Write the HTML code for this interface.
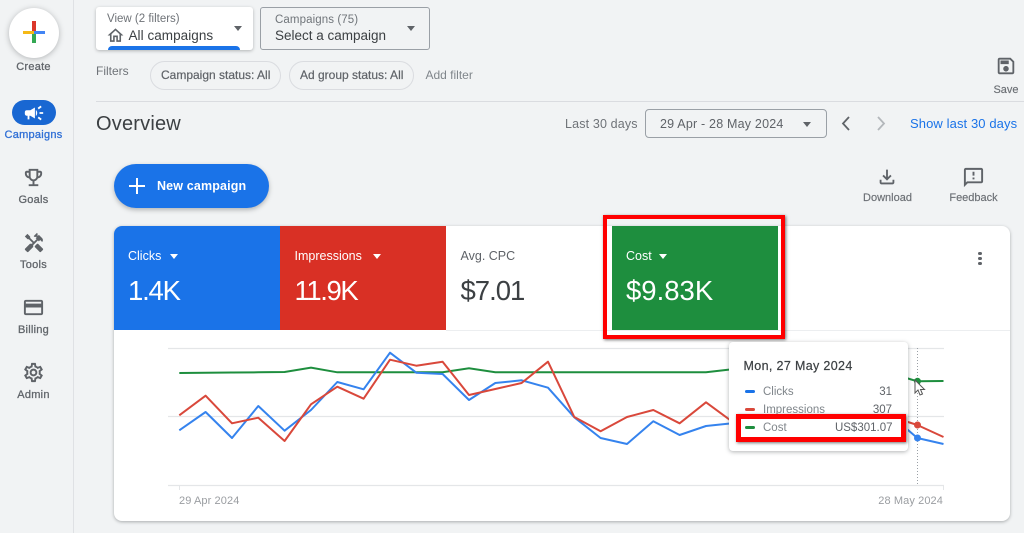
<!DOCTYPE html>
<html><head><meta charset="utf-8"><style>
html,body{margin:0;padding:0}
body{width:1024px;height:533px;overflow:hidden;background:#f1f3f4;position:relative;font-family:"Liberation Sans",Arial,sans-serif;color:#5f6368}
.a{position:absolute}
.t{position:absolute;white-space:nowrap;line-height:16px;height:16px}
.c{transform:translateX(-50%)}
.r{transform:translateX(-100%)}
svg.i{position:absolute;fill:#5f6368}
.nav{font-size:11px;color:#62666b;letter-spacing:.25px;-webkit-text-stroke:.3px currentColor}
.tri{position:absolute;width:0;height:0;border-left:4.5px solid transparent;border-right:4.5px solid transparent;border-top:5px solid #5f6368}
.trw{border-top-color:#fff}
.chip{position:absolute;height:27px;top:61px;border:1px solid #dadce0;border-radius:15px}
.lg{position:absolute;width:10px;height:3px;border-radius:2px;left:745px}
</style></head><body>

<div class="a" style="left:73px;top:0;width:1px;height:533px;background:#dfe1e4"></div>

<!-- Create -->
<div class="a" style="left:9px;top:8px;width:50px;height:50px;border-radius:50%;background:#fff;box-shadow:0 1px 6px rgba(60,64,67,.35)"></div>
<div class="a" style="left:32px;top:21px;width:3.5px;height:12px;background:#db372a"></div>
<div class="a" style="left:23px;top:30.5px;width:11px;height:3.5px;background:#f5b916"></div>
<div class="a" style="left:34px;top:30.5px;width:11px;height:3.5px;background:#4285f4"></div>
<div class="a" style="left:32px;top:34px;width:3.5px;height:9px;background:#34a853"></div>
<div class="t nav c" style="left:33.5px;top:59px">Create</div>

<!-- Campaigns -->
<div class="a" style="left:12px;top:100px;width:44px;height:25px;border-radius:13px;background:#1967d2"></div>
<svg class="i" style="left:23px;top:102px;width:22px;height:22px;fill:#fff" viewBox="0 0 24 24"><path d="M18 11v2h4v-2h-4zm-2 6.61c.96.71 2.21 1.65 3.2 2.39.4-.53.8-1.07 1.2-1.6-.99-.74-2.24-1.68-3.2-2.4-.4.54-.8 1.08-1.2 1.61zM20.4 5.6c-.4-.53-.8-1.07-1.2-1.6-.99.74-2.24 1.68-3.2 2.4.4.53.8 1.07 1.2 1.6.96-.72 2.21-1.65 3.2-2.4zM4 9c-1.1 0-2 .9-2 2v2c0 1.1.9 2 2 2h1v4h2v-4h1l5 3V6L8 9H4zm11.5 3c0-1.33-.58-2.53-1.5-3.35v6.69c.92-.81 1.5-2.01 1.5-3.34z"/></svg>
<div class="t nav c" style="left:33.5px;top:127px;color:#2f6fd6">Campaigns</div>

<!-- Goals -->
<svg class="i" style="left:22px;top:166px;width:23px;height:23px" viewBox="0 0 24 24"><path d="M19 5h-2V3H7v2H5c-1.1 0-2 .9-2 2v1c0 2.55 1.92 4.63 4.39 4.94.63 1.5 1.98 2.63 3.61 2.96V19H7v2h10v-2h-4v-3.1c1.63-.33 2.98-1.46 3.61-2.96C19.08 12.63 21 10.55 21 8V7c0-1.1-.9-2-2-2zM5 8V7h2v3.82C5.84 10.4 5 9.3 5 8zm7 6c-1.65 0-3-1.35-3-3V5h6v6c0 1.65-1.35 3-3 3zm7-6c0 1.3-.84 2.4-2 2.82V7h2v1z"/></svg>
<div class="t nav c" style="left:33.5px;top:192px">Goals</div>

<!-- Tools -->
<svg class="i" style="left:23px;top:232px;width:22px;height:22px" viewBox="0 0 24 24"><path d="M21.67 18.17l-5.3-5.3h-.99l-2.54 2.54v.99l5.3 5.3c.39.39 1.02.39 1.41 0l2.12-2.12c.39-.38.39-1.02 0-1.41z"/><path d="M17.34 10.19l1.41-1.41 2.12 2.12c1.17-1.17 1.17-3.07 0-4.24l-3.54-3.54-1.41 1.41V1.71l-.7-.71-3.54 3.54.71.71h2.83l-1.41 1.41 1.06 1.06-2.89 2.89-4.13-4.13V5.06L4.83 2.04 2 4.87 5.03 7.9h1.41l4.13 4.13-.85.85H7.6l-5.3 5.3c-.39.39-.39 1.02 0 1.41l2.12 2.12c.39.39 1.02.39 1.41 0l5.3-5.3v-2.12l5.15-5.15 1.06 1.05z"/></svg>
<div class="t nav c" style="left:33.5px;top:257px">Tools</div>

<!-- Billing -->
<svg class="i" style="left:22px;top:296px;width:23px;height:23px" viewBox="0 0 24 24"><path d="M20 4H4c-1.11 0-1.99.89-1.99 2L2 18c0 1.11.89 2 2 2h16c1.11 0 2-.89 2-2V6c0-1.11-.89-2-2-2zm0 14H4v-6h16v6zm0-10H4V6h16v2z"/></svg>
<div class="t nav c" style="left:33.5px;top:322px">Billing</div>

<!-- Admin -->
<svg class="i" style="left:22px;top:361px;width:23px;height:23px" viewBox="0 0 24 24"><path d="M19.43 12.98c.04-.32.07-.64.07-.98 0-.34-.03-.66-.07-.98l2.11-1.65c.19-.15.24-.42.12-.64l-2-3.46c-.09-.16-.26-.25-.44-.25-.06 0-.12.01-.17.03l-2.49 1c-.52-.4-1.08-.73-1.69-.98l-.38-2.65C14.46 2.18 14.25 2 14 2h-4c-.25 0-.46.18-.49.42l-.38 2.65c-.61.25-1.17.59-1.69.98l-2.49-1c-.06-.02-.12-.03-.18-.03-.17 0-.34.09-.43.25l-2 3.46c-.13.22-.07.49.12.64l2.11 1.65c-.04.32-.07.65-.07.98 0 .33.03.66.07.98l-2.11 1.65c-.19.15-.24.42-.12.64l2 3.46c.09.16.26.25.44.25.06 0 .12-.01.17-.03l2.49-1c.52.4 1.08.73 1.69.98l.38 2.65c.03.24.24.42.49.42h4c.25 0 .46-.18.49-.42l.38-2.65c.61-.25 1.17-.59 1.69-.98l2.49 1c.06.02.12.03.18.03.17 0 .34-.09.43-.25l2-3.46c.12-.22.07-.49-.12-.64l-2.11-1.65zm-1.98-1.71c.04.31.05.52.05.73 0 .21-.02.43-.05.73l-.14 1.13.89.7 1.08.84-.7 1.21-1.27-.51-1.04-.42-.9.68c-.43.32-.84.56-1.25.73l-1.06.43-.16 1.13-.2 1.35h-1.4l-.19-1.35-.16-1.13-1.06-.43c-.43-.18-.83-.41-1.23-.71l-.91-.7-1.06.43-1.27.51-.7-1.21 1.08-.84.89-.7-.14-1.13c-.03-.31-.05-.54-.05-.74s.02-.43.05-.73l.14-1.13-.89-.7-1.08-.84.7-1.21 1.27.51 1.04.42.9-.68c.43-.32.84-.56 1.25-.73l1.06-.43.16-1.13.2-1.35h1.39l.19 1.35.16 1.13 1.06.43c.43.18.83.41 1.23.71l.91.7 1.06-.43 1.27-.51.7 1.21-1.07.85-.89.7.14 1.13zM12 8c-2.21 0-4 1.79-4 4s1.79 4 4 4 4-1.79 4-4-1.79-4-4-4zm0 6c-1.1 0-2-.9-2-2s.9-2 2-2 2 .9 2 2-.9 2-2 2z"/></svg>
<div class="t nav c" style="left:33.5px;top:387px">Admin</div>

<!-- View box -->
<div class="a" style="left:96px;top:7px;width:157px;height:43px;background:#fff;border-radius:3px;box-shadow:0 1px 3px rgba(60,64,67,.35);overflow:hidden">
  <div class="a" style="left:12px;top:39px;width:132px;height:6px;background:#1a73e8;border-radius:4px 4px 0 0"></div>
</div>
<div class="t" style="left:107px;top:11px;font-size:11.5px;color:#6f7378">View (2 filters)</div>
<svg class="i" style="left:106px;top:26px;width:19px;height:19px" viewBox="0 0 24 24"><path d="M12 5.69l5 4.5V18h-2v-6H9v6H7v-7.81l5-4.5M12 3L2 12h3v8h6v-6h2v6h6v-8h3L12 3z"/></svg>
<div class="t" style="left:128.5px;top:28px;font-size:13.5px;color:#3c4043;letter-spacing:.05px">All campaigns</div>
<div class="tri" style="left:234px;top:26px"></div>

<!-- Campaign box -->
<div class="a" style="left:260px;top:7px;width:168px;height:41px;border:1px solid #9aa0a6;border-radius:3px"></div>
<div class="t" style="left:275px;top:12px;font-size:11.5px;color:#70757a;letter-spacing:.1px">Campaigns (75)</div>
<div class="t" style="left:275px;top:28px;font-size:13.5px;color:#3c4043">Select a campaign</div>
<div class="tri" style="left:407px;top:26px"></div>

<!-- Filters -->
<div class="t" style="left:96px;top:63px;font-size:12px;color:#6f7378">Filters</div>
<div class="chip" style="left:150px;width:129px"></div>
<div class="t" style="left:161px;top:67px;font-size:12px;color:#5f6368;-webkit-text-stroke:.2px #5f6368">Campaign status: All</div>
<div class="chip" style="left:289px;width:123px"></div>
<div class="t" style="left:300px;top:67px;font-size:12px;color:#5f6368;-webkit-text-stroke:.2px #5f6368">Ad group status: All</div>
<div class="t" style="left:425.5px;top:67px;font-size:12px;color:#80868b">Add filter</div>

<!-- Save -->
<svg class="i" style="left:995px;top:55px;width:22px;height:22px" viewBox="0 0 24 24"><path d="M17 3H5c-1.11 0-2 .9-2 2v14c0 1.1.89 2 2 2h14c1.1 0 2-.9 2-2V7l-4-4zm2 16H5V5h11.17L19 7.83V19zm-7-7c-1.66 0-3 1.34-3 3s1.34 3 3 3 3-1.34 3-3-1.34-3-3-3zM6 6h9v4H6z"/></svg>
<div class="t c" style="left:1006px;top:82px;font-size:11px;color:#6b6f74;-webkit-text-stroke:.15px #6b6f74">Save</div>

<div class="a" style="left:96px;top:101px;width:928px;height:1px;background:#dadce0"></div>

<!-- Overview row -->
<div class="t" style="left:96px;top:112px;font-size:20px;line-height:24px;height:24px;color:#3c4043;letter-spacing:.2px">Overview</div>
<div class="t" style="left:565px;top:116px;font-size:12.5px;color:#6f7378;letter-spacing:.15px">Last 30 days</div>
<div class="a" style="left:645px;top:109px;width:180px;height:27px;border:1px solid #9aa0a6;border-radius:4px"></div>
<div class="t" style="left:660px;top:116px;font-size:12.5px;color:#5f6368;letter-spacing:.2px">29 Apr - 28 May 2024</div>
<div class="tri" style="left:803px;top:122px"></div>
<svg class="a" style="left:838px;top:114px" width="50" height="20" fill="none"><path d="M11 3L5 9.5 11 16" stroke="#5f6368" stroke-width="1.8"/><path d="M40 3l6 6.5-6 6.5" stroke="#b3b7bb" stroke-width="1.8"/></svg>
<div class="t" style="left:910px;top:116px;font-size:13px;color:#1a73e8;letter-spacing:.1px">Show last 30 days</div>

<!-- New campaign -->
<div class="a" style="left:114px;top:164px;width:155px;height:44px;border-radius:22px;background:#1a73e8;box-shadow:0 2px 5px rgba(60,64,67,.35)"></div>
<div class="a" style="left:129px;top:185px;width:16px;height:2.4px;background:#fff"></div>
<div class="a" style="left:135.8px;top:178px;width:2.4px;height:16px;background:#fff"></div>
<div class="t" style="left:157px;top:178px;font-size:12.5px;font-weight:bold;color:#fff;letter-spacing:.15px">New campaign</div>

<!-- Download & Feedback -->
<svg class="i" style="left:876px;top:166px;width:22px;height:22px" viewBox="0 0 24 24"><path d="M18 15v3H6v-3H4v3c0 1.1.9 2 2 2h12c1.1 0 2-.9 2-2v-3h-2zm-1-4l-1.41-1.41L13 12.17V4h-2v8.17L8.41 9.59 7 11l5 5 5-5z"/></svg>
<div class="t c" style="left:887.5px;top:190px;font-size:11px;color:#6b6f74;-webkit-text-stroke:.15px #6b6f74">Download</div>
<svg class="i" style="left:962px;top:166px;width:23px;height:23px" viewBox="0 0 24 24"><path d="M20 2H4c-1.1 0-1.99.9-1.99 2L2 22l4-4h14c1.1 0 2-.9 2-2V4c0-1.1-.9-2-2-2zm0 14H5.17L4 17.17V4h16v12zM11 12h2v2h-2zm0-6h2v4h-2z"/></svg>
<div class="t c" style="left:973.5px;top:190px;font-size:11px;color:#6b6f74;-webkit-text-stroke:.15px #6b6f74">Feedback</div>

<!-- Card -->
<div class="a" style="left:114px;top:226px;width:896px;height:295px;background:#fff;border-radius:8px;box-shadow:0 1px 3px rgba(60,64,67,.4);overflow:hidden">
  <div class="a" style="left:0;top:0;width:166px;height:104px;background:#1a73e8"></div>
  <div class="a" style="left:166px;top:0;width:166px;height:104px;background:#d93025"></div>
  <div class="a" style="left:332px;top:104px;width:564px;height:1px;background:#eceef0"></div>
</div>

<!-- Metrics -->
<div class="t" style="left:128px;top:248px;font-size:12.5px;color:#fff">Clicks</div>
<div class="tri trw" style="left:170px;top:254px"></div>
<div class="t" style="left:128px;top:274px;font-size:27.5px;line-height:34px;height:34px;color:#fff;letter-spacing:-1.2px">1.4K</div>
<div class="t" style="left:294.5px;top:248px;font-size:12.5px;color:#fff">Impressions</div>
<div class="tri trw" style="left:372.5px;top:254px"></div>
<div class="t" style="left:294.5px;top:274px;font-size:27.5px;line-height:34px;height:34px;color:#fff;letter-spacing:-1.4px">11.9K</div>
<div class="t" style="left:460.5px;top:248px;font-size:12.5px;color:#5f6368">Avg. CPC</div>
<div class="t" style="left:460.5px;top:274px;font-size:27.5px;line-height:34px;height:34px;color:#3c4043;letter-spacing:-1px">$7.01</div>

<!-- Cost -->
<div class="a" style="left:612px;top:226px;width:166px;height:104px;background:#1e8e3e"></div>
<div class="t" style="left:626px;top:248px;font-size:12.5px;color:#fff">Cost</div>
<div class="tri trw" style="left:659px;top:254px"></div>
<div class="t" style="left:626px;top:274px;font-size:27.5px;line-height:34px;height:34px;color:#fff">$9.83K</div>
<div class="a" style="left:603px;top:215px;width:174px;height:116px;border:4.5px solid #f00;box-shadow:1px 1px 3px rgba(0,0,0,.55)"></div>

<!-- More -->
<div class="a" style="left:978.2px;top:251.5px;width:3.6px;height:3.6px;border-radius:50%;background:#5f6368"></div>
<div class="a" style="left:978.2px;top:256.5px;width:3.6px;height:3.6px;border-radius:50%;background:#5f6368"></div>
<div class="a" style="left:978.2px;top:261.5px;width:3.6px;height:3.6px;border-radius:50%;background:#5f6368"></div>

<!-- Chart -->
<svg class="a" style="left:0;top:0" width="1024" height="533" fill="none">
  <path d="M168 348.5H944M168 416.5H944M168 485.5H944" stroke="#e4e6e8" stroke-width="1.2"/>
  <path d="M179.5 485v5M943.5 485v5" stroke="#e4e6e8" stroke-width="1"/>
  <path d="M917.5 348V485" stroke="#9aa0a6" stroke-width="1" stroke-dasharray="1 2"/>
  <polyline stroke="#1e8e3e" stroke-width="2" points="179.3,373 205.6,372.7 232,372.5 258.3,372.3 284.6,372 311,367.7 337.3,372.3 363.6,372.3 390,372.3 416.3,372.3 442.6,372.3 469,368.3 495.3,372.3 521.6,372.3 548,372.3 574.3,372.3 600.6,372.3 627,372.3 653.3,372.3 679.6,372.3 706,372.3 732.3,369.3 758,367 880,372 908,378.5 917.3,381.3 943.5,381"/>
  <polyline stroke="#3583ee" stroke-width="2" stroke-linejoin="round" points="179.3,430.3 205.6,412 232,438 258.3,406 284.6,430.7 311,410 337.3,382 363.6,389.3 390,352.7 416.3,372.7 442.6,374 469,400 495.3,383 521.6,380.3 548,387.7 574.3,417.3 600.6,438 627,444 653.3,421.3 679.6,435 706,426 732.3,423.3 890,425 908,430 917.3,438 943.5,444"/>
  <polyline stroke="#d9483b" stroke-width="2" stroke-linejoin="round" points="179.3,415.3 205.6,395.7 232,423.3 258.3,417.7 284.6,441 311,404.3 337.3,386.7 363.6,398.7 390,359.7 416.3,365.7 442.6,361.7 469,395 495.3,389 521.6,383 548,361.7 574.3,417 600.6,431.3 627,417 653.3,410 679.6,423.3 706,402.3 732.3,421.7 890,415 908,422 917.3,425 943.5,437"/>
  <circle cx="917.5" cy="381.3" r="3.5" fill="#1e8e3e"/>
  <circle cx="917.5" cy="425" r="3.5" fill="#d9483b"/>
  <circle cx="917.5" cy="438" r="3.5" fill="#3583ee"/>
  <path d="M915 380l0 13 3-3 2 5 2.5-1-2-4.5 4 0z" fill="#fff" stroke="#555" stroke-width="1"/>
</svg>
<div class="t" style="left:179px;top:492.5px;font-size:11px;color:#9a9da1;letter-spacing:.1px">29 Apr 2024</div>
<div class="t r" style="left:943px;top:492.5px;font-size:11px;color:#9a9da1;letter-spacing:.1px">28 May 2024</div>

<!-- Tooltip -->
<div class="a" style="left:729px;top:342px;width:179px;height:109px;background:#fff;border-radius:4px;box-shadow:0 1px 4px rgba(60,64,67,.4)"></div>
<div class="t" style="left:743.5px;top:358px;font-size:12.5px;color:#3c4043;letter-spacing:.35px;-webkit-text-stroke:.2px #3c4043">Mon, 27 May 2024</div>
<div class="lg" style="top:389.5px;background:#1a73e8"></div>
<div class="t" style="left:763px;top:383.5px;font-size:11.5px;color:#80868b">Clicks</div>
<div class="t r" style="left:892px;top:383.5px;font-size:11.5px;color:#5f6368">31</div>
<div class="lg" style="top:407.5px;background:#d9483b"></div>
<div class="t" style="left:763px;top:401.5px;font-size:11.5px;color:#80868b">Impressions</div>
<div class="t r" style="left:892px;top:401.5px;font-size:11.5px;color:#5f6368">307</div>
<div class="lg" style="top:425.5px;background:#1e8e3e"></div>
<div class="t" style="left:763px;top:419.5px;font-size:11.5px;color:#80868b">Cost</div>
<div class="t r" style="left:892.5px;top:419.5px;font-size:11.5px;color:#5f6368">US$301.07</div>
<div class="a" style="left:736px;top:414px;width:160px;height:18px;border:5px solid #f00;box-shadow:1px 1px 3px rgba(0,0,0,.55)"></div>

</body></html>
